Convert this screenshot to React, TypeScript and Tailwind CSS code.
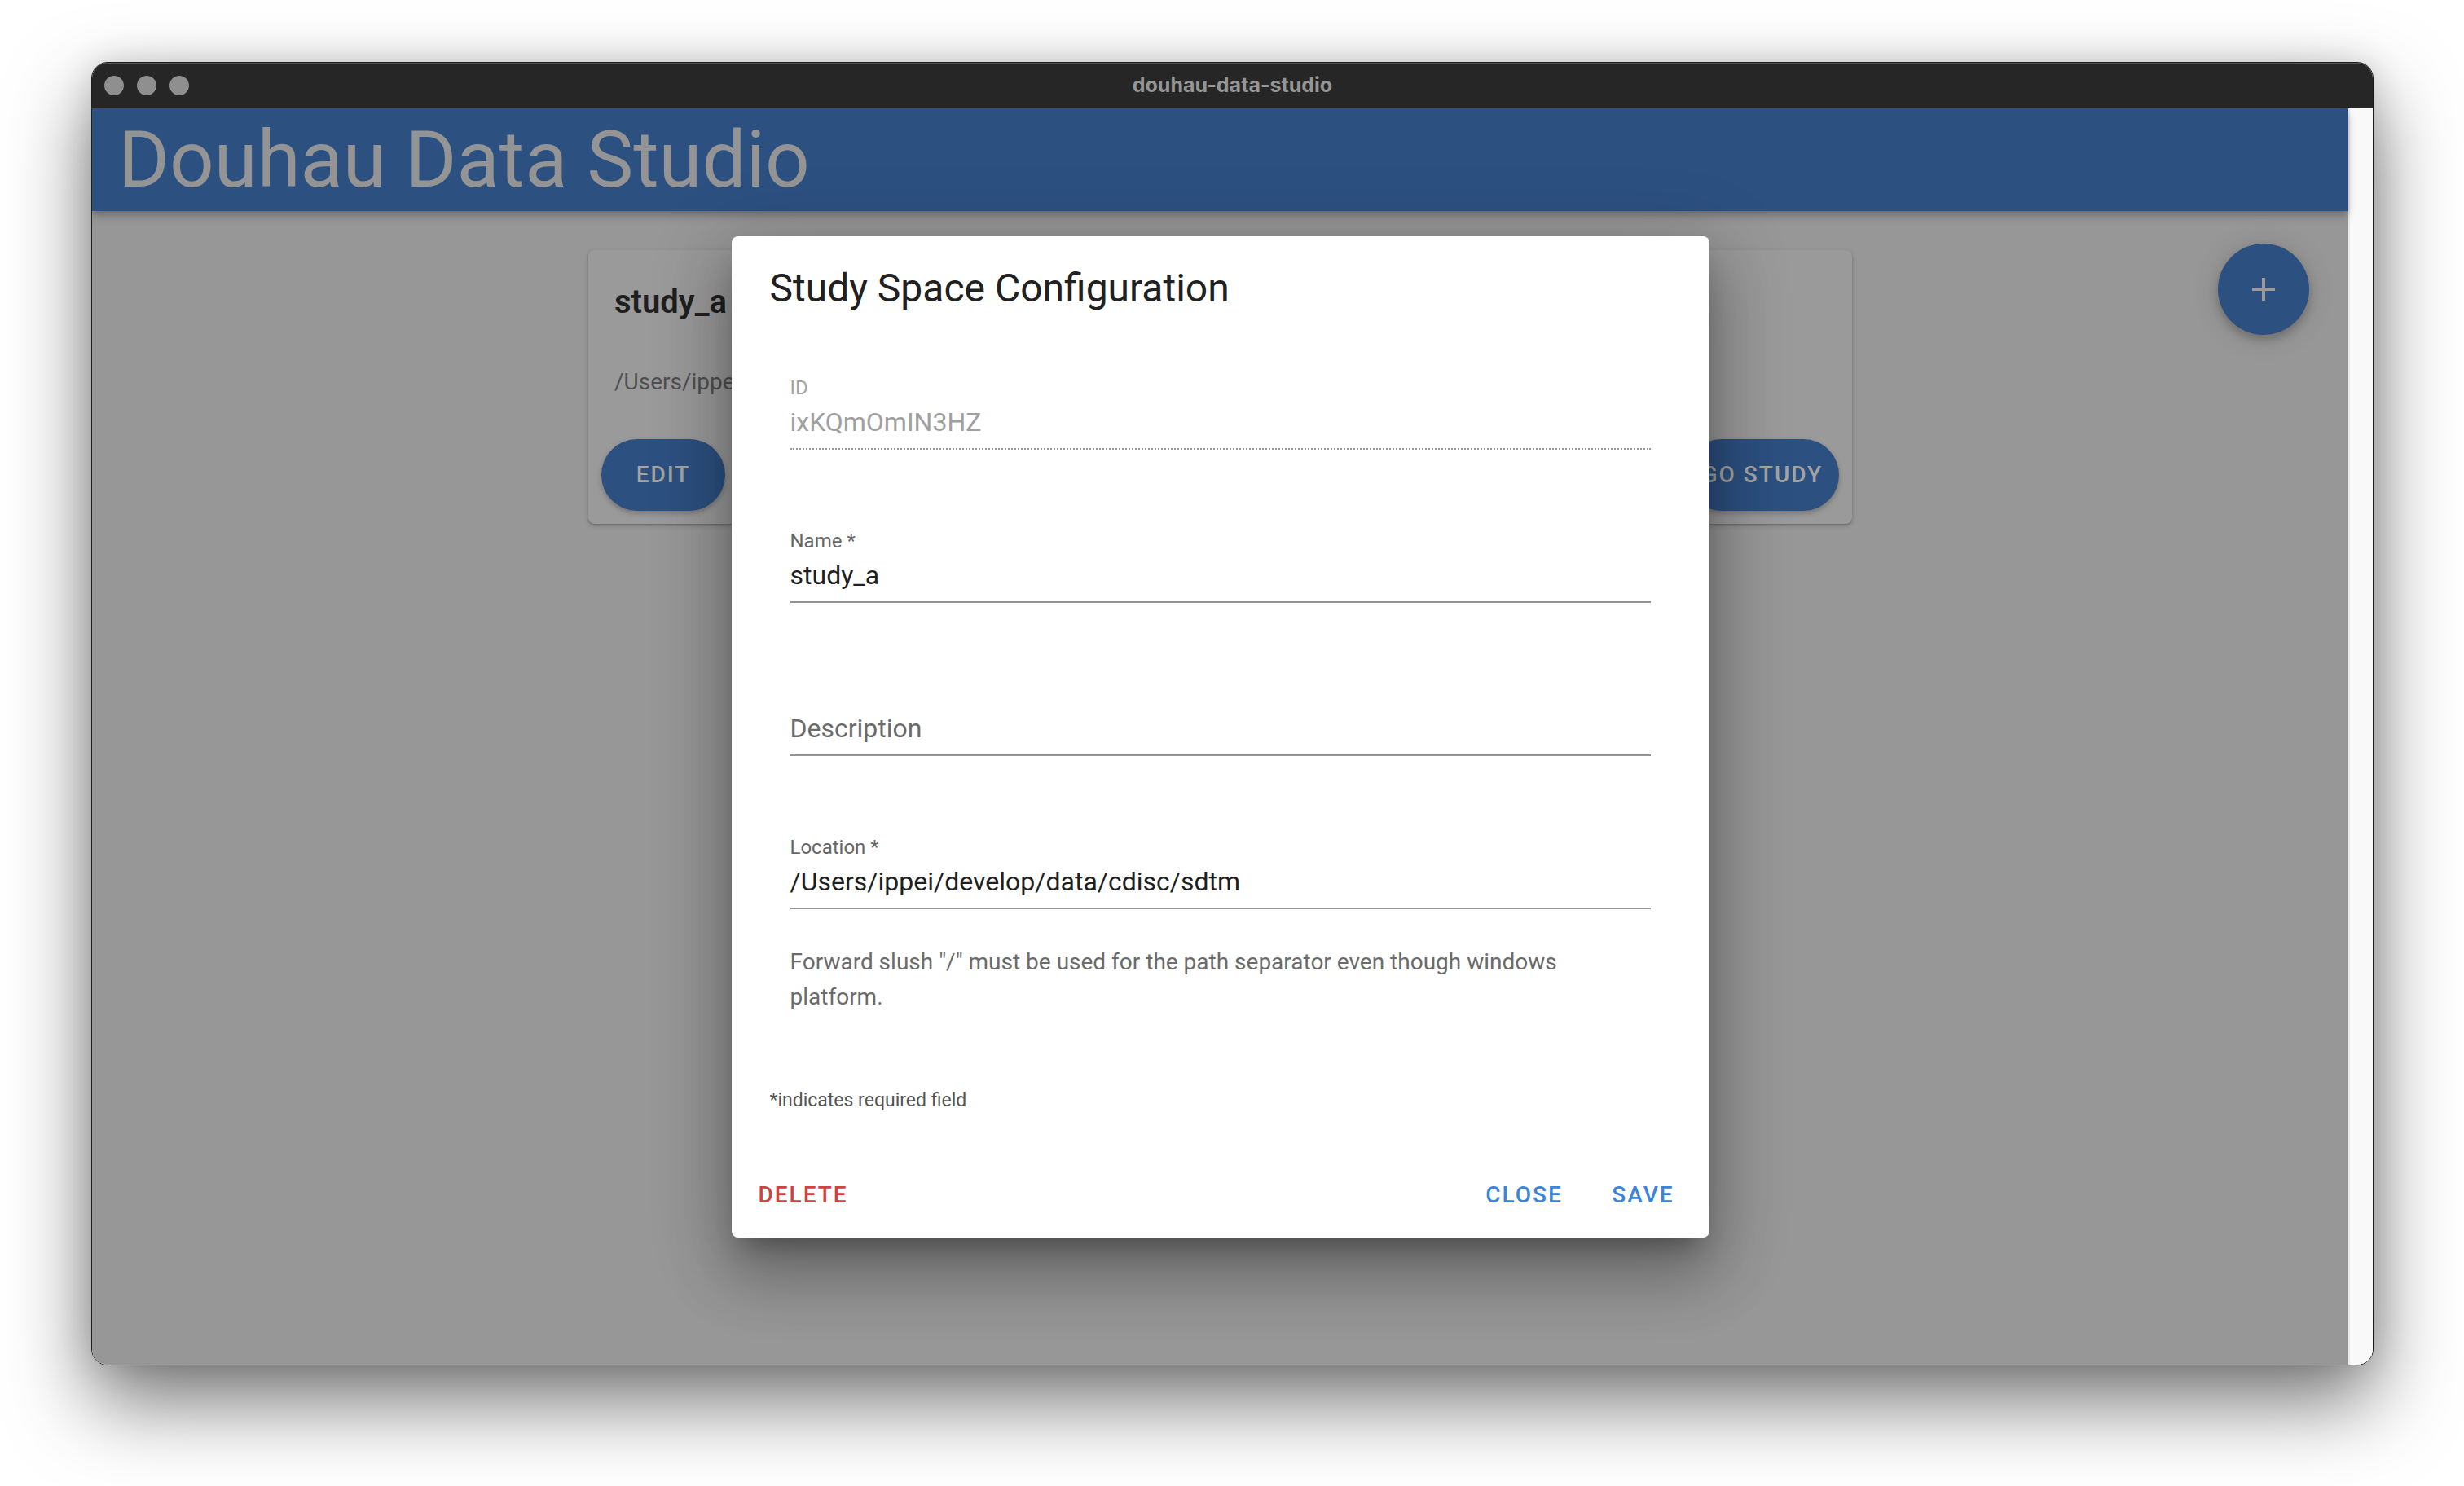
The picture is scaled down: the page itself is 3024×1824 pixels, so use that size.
import React from 'react'

// Champ de formulaire façon MUI (label flottant + soulignement)
function Field({
  label,
  value,
  placeholder,
  disabled,
}: {
  label?: string
  value?: string
  placeholder?: string
  disabled?: boolean
}) {
  return (
    <div
      className={`flex flex-col border-b-2 ${
        disabled ? 'border-dotted border-[#9a9a9a]' : 'border-solid border-[#949494]'
      }`}
    >
      <div
        className={`h-[36px] leading-[36px] text-[24px] ${
          disabled ? 'text-[#a3a3a3]' : 'text-[#666666]'
        }`}
      >
        {label}
      </div>
      <div className="h-[56px] pb-[8px]">
        {value ? (
          <div
            className={`leading-[48px] text-[32px] ${
              disabled ? 'text-[#a0a0a0]' : 'text-[#1f1f1f]'
            }`}
          >
            {value}
          </div>
        ) : (
          <div className="leading-[48px] text-[32px] text-[#6b6b6b]">{placeholder}</div>
        )}
      </div>
    </div>
  )
}

function TextButton({ label, color }: { label: string; color: string }) {
  return (
    <button
      className={`min-w-[128px] h-[72px] px-[16px] flex items-center justify-center text-[28px] font-medium tracking-[2px] uppercase ${color}`}
    >
      {label}
    </button>
  )
}

export default function App() {
  return (
    <div className="w-[3024px] h-[1824px] bg-white pt-[76px] pl-[112px] font-[Roboto,'Noto_Sans',sans-serif]">
      <div className="w-[2801px] h-[1600px] flex flex-col rounded-[20px] border border-[#1c1c1c] overflow-hidden shadow-[0_44px_100px_rgba(0,0,0,0.55),0_0_40px_rgba(0,0,0,0.12)]">
        {/* Barre de titre macOS */}
        <div className="relative h-[56px] shrink-0 bg-[#262626] border-b border-black shadow-[inset_0_1px_0_#555555] flex items-center">
          <div className="flex items-center gap-[16px] pl-[15px]">
            <span className="w-[24px] h-[24px] rounded-full bg-[#8f8f8f]" />
            <span className="w-[24px] h-[24px] rounded-full bg-[#8f8f8f]" />
            <span className="w-[24px] h-[24px] rounded-full bg-[#8f8f8f]" />
          </div>
          <div className="absolute inset-0 flex items-center justify-center font-[Inter,sans-serif] font-bold text-[25px] text-[#959595]">
            douhau-data-studio
          </div>
        </div>

        {/* Zone de contenu */}
        <div className="relative flex-1 flex min-h-0">
          <div className="flex-1 flex flex-col min-w-0">
            <header className="relative z-10 h-[126px] shrink-0 bg-[#2c5080] flex items-center pl-[32px] shadow-[0_4px_8px_-2px_rgba(0,0,0,0.25),0_8px_10px_rgba(0,0,0,0.12)]">
              <h1 className="text-[96px] leading-[110px] font-normal text-[#949494]">
                Douhau Data Studio
              </h1>
            </header>

            <main className="relative flex-1 bg-[#979797] pt-[48px]">
              {/* Carte d'étude */}
              <div className="mx-auto w-[1551px] rounded-[8px] bg-[#9a9a9a] shadow-[0_2px_2px_rgba(0,0,0,0.14),0_2px_6px_rgba(0,0,0,0.18)]">
                <div className="px-[32px] pt-[32px] pb-[34px]">
                  <div className="h-[64px] leading-[64px] text-[40px] font-semibold text-[#1f1f1f]">
                    study_a
                  </div>
                  <div className="mt-[46px] h-[40px] leading-[40px] text-[28px] text-[#4f4f4f] whitespace-nowrap">
                    /Users/ippei/develop/data/cdisc/sdtm
                  </div>
                </div>
                <div className="flex items-center justify-between p-[16px]">
                  <button className="w-[152px] h-[88px] rounded-full bg-[#2c5080] text-[#a3a3a3] text-[28px] font-medium tracking-[2px] shadow-[0_3px_6px_rgba(0,0,0,0.25)]">
                    EDIT
                  </button>
                  <button className="h-[88px] px-[20px] rounded-full bg-[#2c5080] text-[#a3a3a3] text-[28px] font-medium tracking-[2px] shadow-[0_3px_6px_rgba(0,0,0,0.25)]">
                    GO STUDY
                  </button>
                </div>
              </div>

              {/* Bouton flottant */}
              <button className="absolute top-[40px] right-[48px] w-[112px] h-[112px] rounded-full bg-[#2c5080] flex items-center justify-center shadow-[0_6px_12px_rgba(0,0,0,0.22),0_2px_36px_rgba(0,0,0,0.12)]">
                <svg width="48" height="48" viewBox="0 0 24 24">
                  <path d="M19 13h-6v6h-2v-6H5v-2h6V5h2v6h6v2z" fill="#9a9a9a" />
                </svg>
              </button>
            </main>
          </div>

          {/* Gouttière de défilement */}
          <div className="w-[30px] shrink-0 bg-[#f9f9f9] border-l-2 border-[#e9e9e9]" />

          {/* Dialogue */}
          <div className="absolute top-0 bottom-0 left-0 right-[30px] z-20 flex items-center justify-center">
            <div className="w-[1200px] flex flex-col rounded-[8px] bg-white shadow-[0_22px_30px_-14px_rgba(0,0,0,0.3),0_48px_76px_6px_rgba(0,0,0,0.2),0_18px_92px_16px_rgba(0,0,0,0.16)]">
              <div className="px-[47px] pt-[32px] h-[96px]">
                <h2 className="h-[64px] leading-[64px] text-[48px] font-normal text-[#212121]">
                  Study Space Configuration
                </h2>
              </div>

              <div className="mt-[72px] pl-[72px] pr-[72px] flex flex-col">
                <Field label="ID" value="ixKQmOmIN3HZ" disabled />
                <div className="mt-[94px]">
                  <Field label="Name *" value="study_a" />
                </div>
                <div className="mt-[94px]">
                  <Field placeholder="Description" />
                </div>
                <div className="mt-[94px]">
                  <Field label="Location *" value="/Users/ippei/develop/data/cdisc/sdtm" />
                </div>
                <p className="mt-[43px] text-[28px] leading-[43px] text-[#6b6b6b] pr-[40px]">
                  Forward slush "/" must be used for the path separator even though windows
                  platform.
                </p>
              </div>

              <div className="mt-[88px] px-[47px] h-[36px] leading-[36px] text-[23px] text-[#555555]">
                *indicates required field
              </div>

              <div className="mt-[62px] mb-[16px] flex items-center justify-between pl-[17px] pr-[17px]">
                <TextButton label="Delete" color="text-[#d04242]" />
                <div className="flex items-center gap-[18px]">
                  <TextButton label="Close" color="text-[#3b84dc]" />
                  <TextButton label="Save" color="text-[#3b84dc]" />
                </div>
              </div>
            </div>
          </div>
        </div>
      </div>
    </div>
  )
}
